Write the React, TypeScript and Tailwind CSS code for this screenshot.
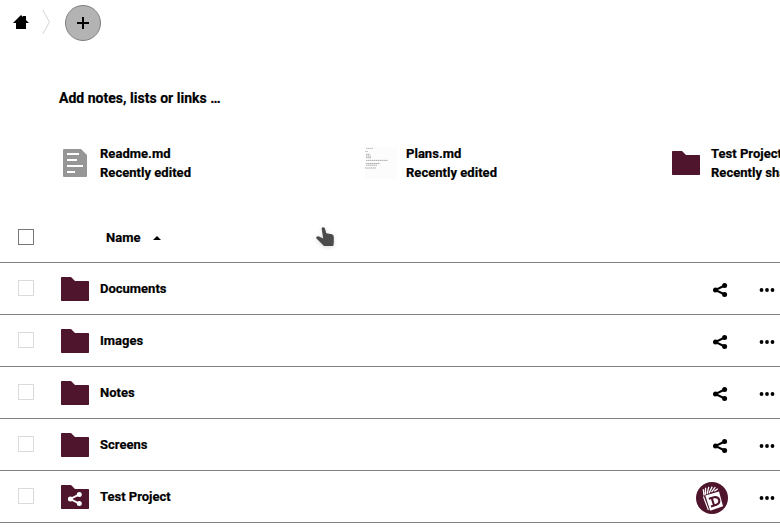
import React from "react";

const MAROON = "#4f152d";

function Folder({ shared = false }: { shared?: boolean }) {
  return (
    <svg width="28" height="24" viewBox="0 0 28 24" className="block shrink-0">
      <path d="M.7 0H10L14 4H27.3Q28 4 28 4.7V23.3Q28 24 27.3 24H.7Q0 24 0 23.3V.7Q0 0 .7 0Z" fill={MAROON} />
      {shared && (
        <g fill="#fff" stroke="#fff" strokeWidth="1.8">
          <path d="M18.3 9.4L9.3 14L18.3 18.6" fill="none" />
          <circle cx="9.4" cy="14" r="1.6" />
          <circle cx="18.3" cy="9.4" r="1.6" />
          <circle cx="18.3" cy="18.6" r="1.6" />
        </g>
      )}
    </svg>
  );
}

function ShareIcon() {
  return (
    <svg width="16" height="16" viewBox="0 0 16 16" className="block">
      <path d="M12.7 3.5L3.4 8L12.7 12.5" fill="none" stroke="#000" strokeWidth="2" />
      <circle cx="3.5" cy="8" r="2.5" />
      <circle cx="12.6" cy="3.5" r="2.5" />
      <circle cx="12.6" cy="12.5" r="2.5" />
    </svg>
  );
}

function Dots() {
  return (
    <svg width="16" height="16" viewBox="0 0 16 16" className="block">
      <circle cx="2.5" cy="8" r="1.9" />
      <circle cx="8" cy="8" r="1.9" />
      <circle cx="13.5" cy="8" r="1.9" />
    </svg>
  );
}

function Avatar() {
  return (
    <svg width="32" height="32" viewBox="0 0 32 32" className="block">
      <circle cx="16" cy="16" r="16" fill={MAROON} />
      <path d="M9.3 13.5L23 9.4L27 24.2L14.2 28.8Z" fill="#fff" />
      <path d="M8 13.5L7.3 7.2M9.3 12.8L9.6 5.8M11 12L12.8 4.8M13 11.2L16.2 4.6M15.5 10.2L19.3 5.2M18.3 9.3L21.8 6.8" stroke="#fff" strokeWidth="1.3" fill="none" />
      <path d="M7.4 14.5L12.4 28" stroke="#fff" strokeWidth="1.1" />
      <path d="M12.8 16.8L18 15.3Q22.2 14.6 23.2 18Q23.8 21.5 20.3 22.8L15 24.5M15.8 16.2L18 23.3" fill="none" stroke={MAROON} strokeWidth="2.1" />
    </svg>
  );
}

function DocumentIcon() {
  return (
    <svg width="24" height="28" viewBox="0 0 24 28" className="block">
      <path d="M1 0H18L24 6V27Q24 28 23 28H1Q0 28 0 27V1Q0 0 1 0Z" fill="#969696" />
      <path d="M4 5H16M4 11H14M4 17H20M4 23H12" stroke="#fff" strokeWidth="2" />
    </svg>
  );
}

function PlansPreview() {
  return (
    <svg width="32" height="32" viewBox="0 0 32 32" className="block">
      <rect width="32" height="32" fill="#fcfcfc" />
      <g fill="none" stroke="#666" strokeWidth=".7" strokeDasharray="1.6 .4">
        <path d="M1 1.4H8M0 4.4H3" opacity=".6" />
        <path d="M1 7.3H5M1 9H6M1 10.7H6M1 13.4H23M1 16.5H15M1 18.2H12M0 21H11" opacity=".75" />
      </g>
    </svg>
  );
}

function Recent({ icon, name, status }: { icon: React.ReactNode; name: string; status: string }) {
  return (
    <div className="flex h-[40px] w-[306px] shrink-0 items-center last:-ml-px">
      <div className="flex w-8 justify-center">{icon}</div>
      <div className="ml-[9px] whitespace-nowrap text-[13px] leading-[19px] tracking-[0.03px]">
        <div>{name}</div>
        <div>{status}</div>
      </div>
    </div>
  );
}

const rows = [
  { name: "Documents" },
  { name: "Images" },
  { name: "Notes" },
  { name: "Screens" },
  { name: "Test Project", shared: true },
];

export default function App() {
  return (
    <div className="relative h-[530px] w-[780px] overflow-hidden bg-white font-['Roboto',sans-serif] font-bold text-black [-webkit-text-stroke:0.2px_black]">
      <nav className="flex h-[46px] items-center">
        <svg width="16" height="16" viewBox="0 0 16 16" className="ml-[13px] block">
          <path d="M8 0L10 2V1H13V5L16 8H13V14H3V8H0Z" />
        </svg>
        <svg width="10" height="26" viewBox="0 0 10 26" className="ml-[13px] block">
          <path d="M.7 0L7.5 12L.7 24" fill="none" stroke="#d4d4d4" strokeWidth="1" />
        </svg>
        <button className="ml-[13px] flex size-9 items-center justify-center rounded-full border border-[#808080] bg-[#b3b3b3]">
          <svg width="12" height="12" viewBox="0 0 12 12">
            <path d="M6 0V12M0 6H12" stroke="#000" strokeWidth="2" />
          </svg>
        </button>
      </nav>
      <div className="mt-[42px] ml-[59px] h-5 text-[14px] leading-5 tracking-[0.02px]">Add notes, lists or links …</div>
      <section className="mt-[35px] flex pl-[59px]">
        <Recent icon={<DocumentIcon />} name="Readme.md" status="Recently edited" />
        <Recent icon={<PlansPreview />} name="Plans.md" status="Recently edited" />
        <Recent icon={<Folder />} name="Test Project" status="Recently shared" />
      </section>
      <header className="mt-[29px] flex h-[51px] items-center border-b border-[#808080] pl-[18px] text-[13px]">
        <div className="size-4 border border-[#777]" />
        <span className="ml-[72px] pt-[2px]">Name</span>
        <svg width="8" height="4" viewBox="0 0 8 4" className="mt-[2px] ml-[13px]">
          <path d="M0 4L4 0L8 4Z" />
        </svg>
      </header>
      <main>
        {rows.map((row) => (
          <div key={row.name} className="flex h-[52px] items-center border-b border-[#808080] pl-[18px] text-[13px]">
            <div className="mb-[2px] size-4 border border-[#dbdbdb]" />
            <div className="ml-[27px] pt-px"><Folder shared={row.shared} /></div>
            <span className="ml-[11px]">{row.name}</span>
            <div className="ml-auto flex w-12 justify-center pt-[3px]">
              <div className={row.shared ? "mr-4" : ""}>{row.shared ? <Avatar /> : <ShareIcon />}</div>
            </div>
            <div className="mr-[5px] ml-[15px] pt-[3px]"><Dots /></div>
          </div>
        ))}
      </main>
      <svg width="20" height="22" viewBox="0 0 20 22" className="absolute top-[226px] left-[315px] drop-shadow-sm">
        <path d="M6.6 2.2Q8 .4 9.8 2L11.3 7.2L17 8.2Q18.8 8.8 18.8 11V16.5L18.3 20H9L1 12Q1.5 9.6 4 10.4L8.2 12.5Z" fill="#4b4b4b" />
      </svg>
    </div>
  );
}
